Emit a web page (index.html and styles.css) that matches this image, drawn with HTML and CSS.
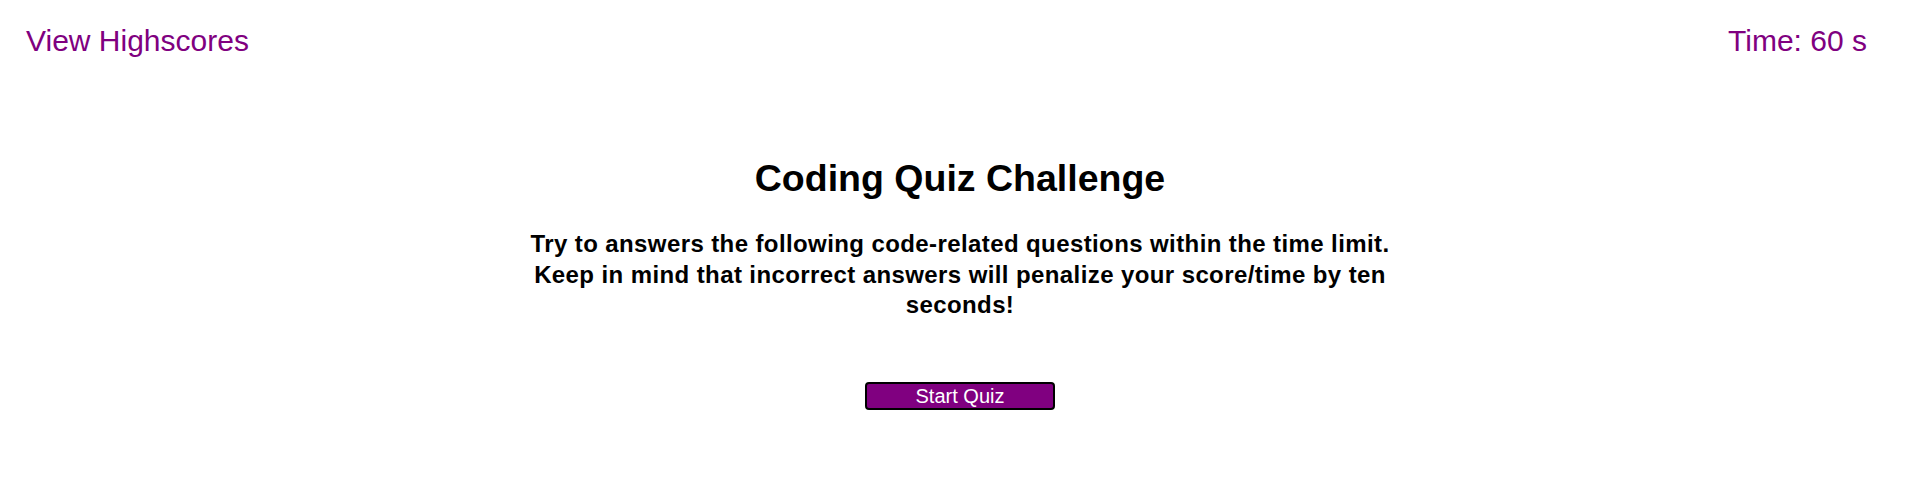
FILE: index.html
```html
<!DOCTYPE html>
<html lang="en">
<head>
<meta charset="utf-8">
<title>Coding Quiz Challenge</title>
<link rel="stylesheet" href="styles.css">
</head>
<body>
  <header class="top-bar">
    <a class="highscores-link" href="#">View Highscores</a>
    <div class="timer">Time: <span class="timer-value">60</span> s</div>
  </header>
  <main class="intro">
    <h1 class="intro-title">Coding Quiz Challenge</h1>
    <p class="intro-text">Try to answers the following code-related questions within the time limit. Keep in mind that incorrect answers will penalize your score/time by ten seconds!</p>
    <button class="start-button" type="button">Start Quiz</button>
  </main>
</body>
</html>
```
FILE: styles.css
```css
html, body {
  margin: 0;
  padding: 0;
  background: #ffffff;
}

body {
  font-family: "Liberation Sans", Arial, sans-serif;
  color: #000000;
}

.top-bar {
  display: flex;
  justify-content: space-between;
  align-items: flex-start;
  padding: 24px 53px 0 26px;
  font-size: 30px;
  line-height: 34px;
  color: #800080;
}

.highscores-link {
  color: #800080;
  text-decoration: none;
}

.timer {
  color: #800080;
}

.intro {
  display: flex;
  flex-direction: column;
  align-items: center;
  text-align: center;
}

.intro-title {
  margin: 99px 0 0;
  font-size: 37.5px;
  line-height: 42px;
  font-weight: bold;
}

.intro-text {
  margin: 30px 0 0;
  max-width: 900px;
  font-size: 24px;
  line-height: 30.5px;
  font-weight: bold;
  letter-spacing: 0.4px;
}

.start-button {
  margin-top: 61px;
  width: 190px;
  height: 28px;
  padding: 0;
  background: #800080;
  color: #ffffff;
  border: 2px solid #000000;
  border-radius: 4px;
  font-family: "Liberation Sans", Arial, sans-serif;
  font-size: 20px;
  line-height: 22px;
  cursor: pointer;
}
```
